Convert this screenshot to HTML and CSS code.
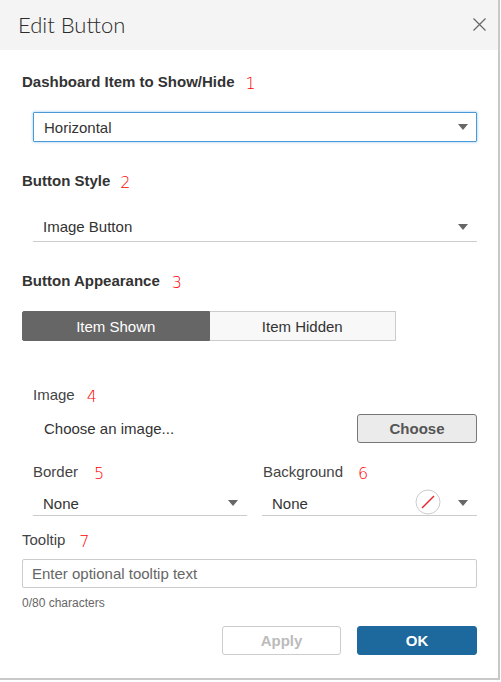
FILE: index.html
```html
<!DOCTYPE html>
<html>
<head>
<meta charset="utf-8">
<link rel="stylesheet" href="styles.css">
</head>
<body>
<div class="dialog">
  <div class="header">
    <div class="title">Edit Button</div>
    <svg class="close" width="13" height="13" viewBox="0 0 13 13"><path d="M0.5 0.5 L12.5 12.5 M12.5 0.5 L0.5 12.5" stroke="#666" stroke-width="1.2" fill="none"/></svg>
  </div>
  <div class="content">
    <div class="label bold l1">Dashboard Item to Show/Hide<span class="num n1">1</span></div>
    <div class="select focused">
      <span>Horizontal</span>
      <span class="arrow"></span>
    </div>

    <div class="label bold l2">Button Style<span class="num n2">2</span></div>
    <div class="select line s2">
      <span>Image Button</span>
      <span class="arrow"></span>
    </div>

    <div class="label bold l3">Button Appearance<span class="num n3">3</span></div>
    <div class="segment">
      <div class="seg active">Item Shown</div>
      <div class="seg">Item Hidden</div>
    </div>

    <div class="label plain indent l4">Image<span class="num n4">4</span></div>
    <div class="image-row">
      <span class="choose-text">Choose an image...</span>
      <button class="btn choose">Choose</button>
    </div>

    <div class="two-col">
      <div class="col col-left">
        <div class="label plain">Border<span class="num n5">5</span></div>
        <div class="select line small">
          <span>None</span>
          <span class="arrow"></span>
        </div>
      </div>
      <div class="col col-right">
        <div class="label plain">Background<span class="num n6">6</span></div>
        <div class="select line small">
          <span>None</span>
          <span class="right">
            <svg class="swatch" width="26" height="26" viewBox="0 0 26 26"><circle cx="13" cy="13" r="12" fill="#fff" stroke="#ccc" stroke-width="1"/><path d="M7 19 L19 7" stroke="#e8232a" stroke-width="1.5"/></svg>
            <span class="arrow"></span>
          </span>
        </div>
      </div>
    </div>

    <div class="label plain l7">Tooltip<span class="num n7">7</span></div>
    <div class="input">Enter optional tooltip text</div>
    <div class="counter">0/80 characters</div>

    <div class="actions">
      <button class="btn apply">Apply</button>
      <button class="btn ok">OK</button>
    </div>
  </div>
</div>
</body>
</html>
```
FILE: styles.css
```css
html, body {
  margin: 0;
  padding: 0;
  background: #fff;
}
body {
  font-family: "Liberation Sans", Arial, sans-serif;
  font-size: 15px;
  color: #333;
}
.dialog {
  width: 498px;
  height: 678px;
  border-right: 2px solid #c8c8c8;
  border-bottom: 2px solid #c8c8c8;
  background: #fff;
}
.header {
  height: 50px;
  background: #f4f4f4;
  display: flex;
  align-items: center;
  justify-content: space-between;
  padding: 0 12px 0 18px;
}
.title {
  font-family: Lato, "Open Sans", sans-serif;
  font-weight: 300;
  font-size: 22px;
  color: #2b2b2b;
  margin-top: -2px;
}
.close {
  display: block;
  margin-top: -1px;
}
.content {
  padding: 0 21px 0 22px;
}
.label {
  height: 20px;
  line-height: 20px;
  display: flex;
  align-items: center;
}
.bold {
  font-weight: bold;
  font-size: 15px;
  color: #333;
}
.plain {
  color: #444;
  font-size: 15px;
}
.indent {
  padding-left: 11px;
}
.num {
  color: #f00;
  font-family: "DejaVu Sans", sans-serif;
  font-weight: 300;
  font-size: 16px;
  margin-left: 11px;
  position: relative;
  top: 2px;
}
.n2 { margin-left: 10px; }
.n3 { margin-left: 12px; }
.n4 { margin-left: 12px; }
.n5 { margin-left: 16px; }
.n6 { margin-left: 15px; }
.n7 { margin-left: 14px; }

.l1 { margin-top: 22px; }
.l2 { margin-top: 29px; }
.l3 { margin-top: 29px; }
.l4 { margin-top: 44px; }
.l7 { margin-top: 14px; }

.select {
  box-sizing: border-box;
  height: 30px;
  display: flex;
  align-items: center;
  justify-content: space-between;
  padding: 0 8px 0 10px;
  color: #333;
}
.focused {
  margin: 20px 0 0 11px;
  border: 1px solid #4a9ad8;
  box-shadow: 0 0 3px rgba(74, 154, 216, 0.6);
  border-radius: 1px;
}
.line {
  border-bottom: 1px solid #ccc;
  margin-left: 11px;
}
.s2 {
  margin-top: 21px;
  padding-left: 10px;
}
.arrow {
  width: 0;
  height: 0;
  border-left: 5px solid transparent;
  border-right: 5px solid transparent;
  border-top: 6px solid #666;
}
.select.line .arrow {
  margin-right: 1px;
}
.segment {
  margin-top: 20px;
  display: flex;
  width: 374px;
  height: 30px;
}
.seg {
  flex: 1;
  box-sizing: border-box;
  display: flex;
  align-items: center;
  justify-content: center;
  background: #f8f8f8;
  border: 1px solid #ccc;
  border-left: none;
  color: #333;
}
.seg.active {
  background: #666;
  color: #fff;
  border: 1px solid #666;
  border-radius: 2px 0 0 2px;
}
.image-row {
  margin-top: 9px;
  display: flex;
  align-items: center;
  justify-content: space-between;
  height: 29px;
}
.choose-text {
  padding-left: 22px;
  color: #333;
}
.btn {
  box-sizing: border-box;
  width: 120px;
  height: 29px;
  font-family: "Liberation Sans", Arial, sans-serif;
  font-size: 15px;
  font-weight: bold;
  border-radius: 3px;
  padding: 0;
}
.choose {
  background: #ebebeb;
  border: 1px solid #777;
  color: #555;
}
.two-col {
  margin-top: 19px;
  display: flex;
}
.col {
  display: flex;
  flex-direction: column;
}
.col-left {
  width: 225px;
}
.col-right {
  flex: 1;
  padding-left: 15px;
}
.col-left .label { padding-left: 11px; }
.col-right .label { padding-left: 1px; }
.col-right .select.line { margin-left: 0; }
.small {
  margin-top: 4px;
  padding-top: 5px;
  padding-left: 10px;
}
.right {
  display: flex;
  align-items: center;
  gap: 17px;
}
.swatch {
  display: block;
  margin-top: -2px;
}
.input {
  box-sizing: border-box;
  margin-top: 9px;
  height: 29px;
  border: 1px solid #ccc;
  border-radius: 2px;
  padding-left: 9px;
  display: flex;
  align-items: center;
  color: #666;
}
.counter {
  margin-top: 7px;
  font-size: 12px;
  line-height: 16px;
  color: #666;
}
.actions {
  margin-top: 15px;
  display: flex;
  justify-content: flex-end;
  gap: 16px;
}
.apply {
  background: #fff;
  border: 1px solid #ccc;
  color: #bbb;
  width: 119px;
}
.ok {
  background: #1d699e;
  border: 1px solid #1d699e;
  color: #fff;
}
```
